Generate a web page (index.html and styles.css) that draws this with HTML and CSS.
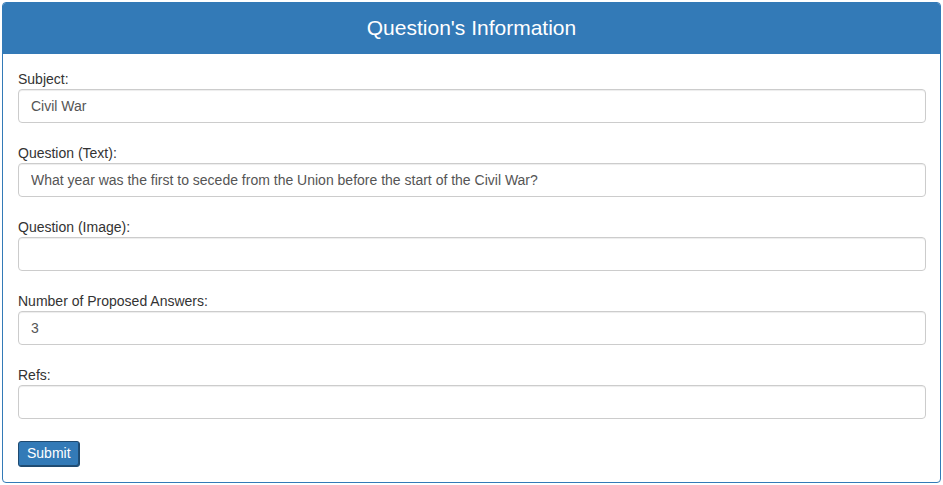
FILE: index.html
```html
<!DOCTYPE html>
<html>
<head>
<meta charset="utf-8">
<link rel="stylesheet" href="styles.css">
</head>
<body>
<div class="panel">
  <div class="panel-heading">Question's Information</div>
  <form class="panel-body">
    <div class="form-group">
      <label class="label">Subject:</label>
      <input class="input" type="text" value="Civil War">
    </div>
    <div class="form-group">
      <label class="label">Question (Text):</label>
      <input class="input" type="text" value="What year was the first to secede from the Union before the start of the Civil War?">
    </div>
    <div class="form-group">
      <label class="label">Question (Image):</label>
      <input class="input" type="text" value="">
    </div>
    <div class="form-group">
      <label class="label">Number of Proposed Answers:</label>
      <input class="input" type="text" value="3">
    </div>
    <div class="form-group">
      <label class="label">Refs:</label>
      <input class="input" type="text" value="">
    </div>
    <div class="actions">
      <button class="btn" type="button">Submit</button>
    </div>
  </form>
</div>
</body>
</html>
```
FILE: styles.css
```css
* { box-sizing: border-box; }
body {
  margin: 0;
  padding: 2px;
  font-family: "Liberation Sans", Arial, sans-serif;
  font-size: 14px;
  line-height: 20px;
  color: #333;
  background: #fff;
}
.panel {
  width: 939px;
  height: 481px;
  border: 1px solid #337ab7;
  border-radius: 4px;
  background: #fff;
  overflow: hidden;
}
.panel-heading {
  background: #337ab7;
  color: #fff;
  font-size: 21px;
  line-height: 22px;
  padding: 14px 15px 15px;
  text-align: center;
}
.panel-body {
  margin: 0;
  padding: 15px 14px 15px 15px;
}
.form-group {
  display: flex;
  flex-direction: column;
  margin-bottom: 20px;
}
.label {
  display: block;
  margin-bottom: 0;
  height: 20px;
  line-height: 20px;
}
.input {
  display: block;
  width: 100%;
  height: 34px;
  padding: 6px 12px;
  font-family: "Liberation Sans", Arial, sans-serif;
  font-size: 14px;
  line-height: 20px;
  color: #555;
  background: #fff;
  border: 1px solid #ccc;
  border-radius: 4px;
  box-shadow: inset 0 1px 1px rgba(0,0,0,.075);
  outline: none;
}
.actions {
  padding-top: 2px;
}
.btn {
  display: inline-block;
  height: 26px;
  padding: 2px 8px 3px;
  font-family: "Liberation Sans", Arial, sans-serif;
  font-size: 14px;
  line-height: 19px;
  color: #fff;
  background: #337ab7;
  border: 1px solid #1f4a70;
  border-radius: 3px;
  box-shadow: inset -1px -1px 0 #204d74;
  cursor: pointer;
}
```
